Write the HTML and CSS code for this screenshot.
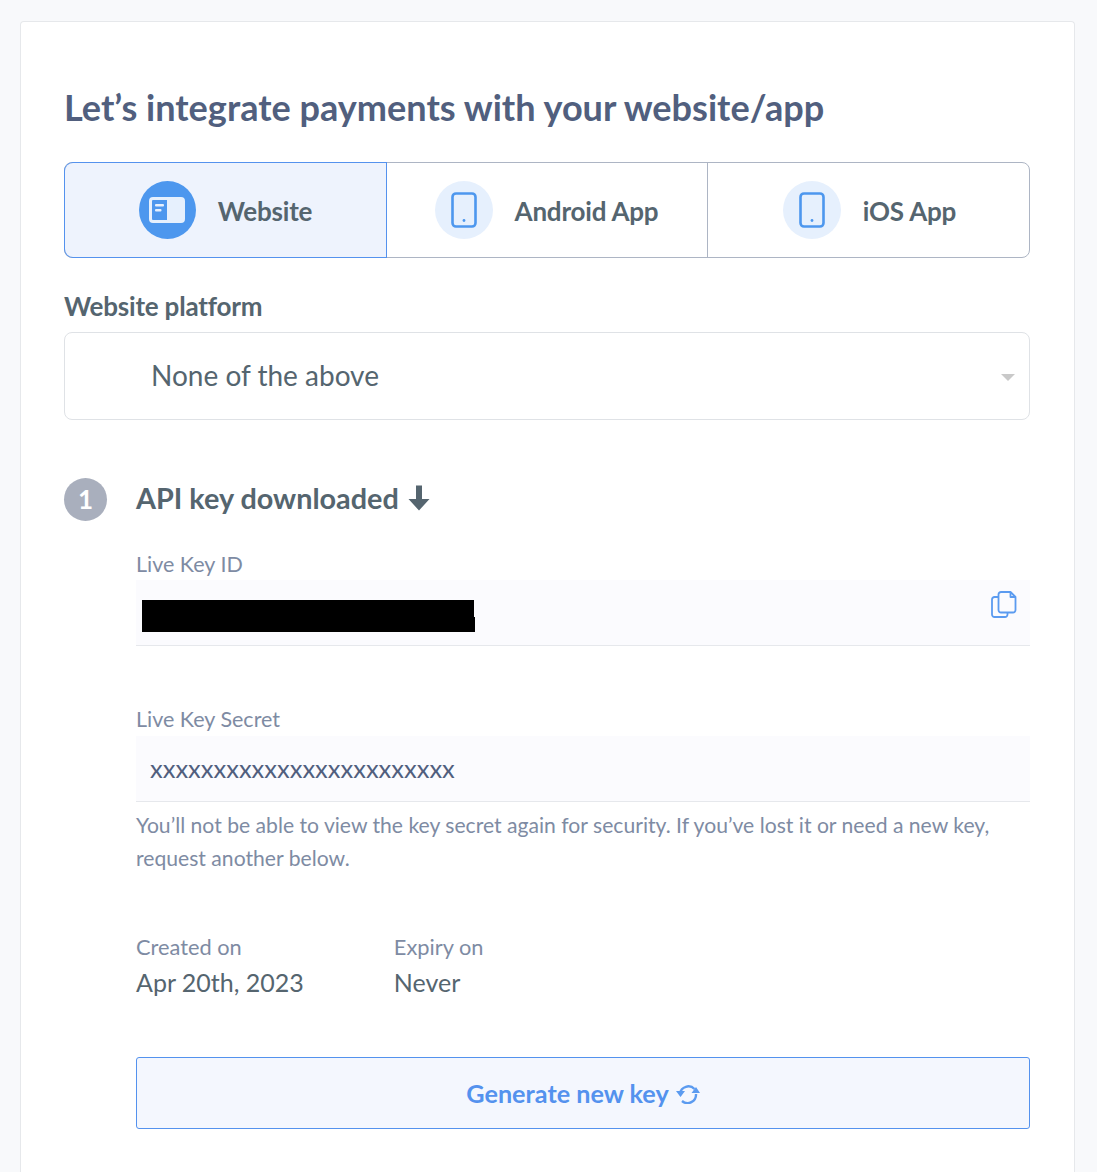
FILE: index.html
```html
<!DOCTYPE html>
<html lang="en">
<head>
<meta charset="utf-8">
<title>Integrate payments</title>
<link rel="stylesheet" href="styles.css">
</head>
<body>
<main class="card">
  <h1 class="title">Let’s integrate payments with your website/app</h1>
  <div class="tabs">
    <div class="tab tab-active">
      <span class="tab-icon tab-icon-active">
        <svg width="36" height="26" viewBox="0 0 36 26"><rect x="1" y="1" width="34" height="24" rx="3" fill="#e6f0fd" stroke="#e6f0fd" stroke-width="2"/><path d="M3 4a1 1 0 0 1 1-1h14v20H4a1 1 0 0 1-1-1z" fill="#4d97ee"/><rect x="6" y="7" width="9" height="2.4" rx="1" fill="#e6f0fd"/><rect x="6" y="12" width="6.5" height="2.4" rx="1" fill="#e6f0fd"/></svg>
      </span>
      <span class="tab-label">Website</span>
    </div>
    <div class="tab">
      <span class="tab-icon">
        <svg width="26" height="36" viewBox="0 0 26 36"><rect x="1.5" y="1.5" width="23" height="33" rx="3.5" fill="none" stroke="#4d97ee" stroke-width="2.6"/><circle cx="13" cy="28.5" r="1.4" fill="#4d97ee"/></svg>
      </span>
      <span class="tab-label">Android App</span>
    </div>
    <div class="tab">
      <span class="tab-icon">
        <svg width="26" height="36" viewBox="0 0 26 36"><rect x="1.5" y="1.5" width="23" height="33" rx="3.5" fill="none" stroke="#4d97ee" stroke-width="2.6"/><circle cx="13" cy="28.5" r="1.4" fill="#4d97ee"/></svg>
      </span>
      <span class="tab-label">iOS App</span>
    </div>
  </div>

  <div class="field-label">Website platform</div>
  <div class="select">
    <span class="select-value">None of the above</span>
    <span class="caret"></span>
  </div>

  <section class="step">
    <div class="step-head">
      <span class="step-num">1</span>
      <h2 class="step-title">API key downloaded</h2>
      <svg class="step-arrow" width="22" height="26" viewBox="0 0 22 26"><path d="M8 0.500h6v13.500h7.500L11 25.500 0.500 14H8z" fill="#55656f"/></svg>
    </div>
    <div class="step-body">
      <div class="key-label">Live Key ID</div>
      <div class="key-box">
        <span class="redact"></span>
        <svg class="copy" width="26" height="27" viewBox="0 0 26 27" fill="none" stroke="#5b9bf0" stroke-width="1.8" stroke-linejoin="round"><path d="M7.500 6H3.500A2.500 2.500 0 0 0 1 8.500v15A2.500 2.500 0 0 0 3.500 26H14a2.500 2.500 0 0 0 2.500-2.500v-2"/><path d="M10 1h9.500l5 5v13a2.500 2.500 0 0 1-2.500 2.500H10A2.500 2.500 0 0 1 7.500 19V3.500A2.500 2.500 0 0 1 10 1z"/><path d="M19.500 1.500v4.500h4.500"/></svg>
      </div>

      <div class="key-label key-label-second">Live Key Secret</div>
      <div class="key-box"><span class="secret">xxxxxxxxxxxxxxxxxxxxxxxx</span></div>
      <p class="hint">You’ll not be able to view the key secret again for security. If you’ve lost it or need a new key, request another below.</p>

      <div class="meta">
        <div class="meta-item">
          <div class="meta-label">Created on</div>
          <div class="meta-value">Apr 20th, 2023</div>
        </div>
        <div class="meta-item">
          <div class="meta-label">Expiry on</div>
          <div class="meta-value">Never</div>
        </div>
      </div>

      <button class="generate" type="button">
        <span>Generate new key</span>
        <svg class="sync" width="24" height="20" viewBox="0 0 24 20"><g fill="none" stroke="#5b9bf0" stroke-width="2.400"><path d="M4 9.500A8.500 8.500 0 0 1 18.500 5"/><path d="M20 10A8.500 8.500 0 0 1 6 17"/></g><path d="M0 7h9L4.500 13zM15.500 9h8.500L20 3z" fill="#5b9bf0"/></svg>
      </button>
    </div>
  </section>
</main>
</body>
</html>
```
FILE: styles.css
```css
* { box-sizing: border-box; }
html, body { margin: 0; padding: 0; }
body {
  background: #f8f9fb;
  font-family: Lato, "Liberation Sans", sans-serif;
  height: 1172px;
  overflow: hidden;
  padding: 21px 22px 0 20px;
}
.card {
  background: #fff;
  border: 1px solid #e6e8eb;
  border-bottom: 0;
  border-radius: 4px 4px 0 0;
  padding: 60px 44px 0 43px;
  height: 1151px;
}
.title {
  margin: 0;
  font-size: 36.100px;
  line-height: 50px;
  font-weight: 700;
  color: #515f7e;
}
.tabs {
  margin-top: 30px;
  display: grid;
  grid-template-columns: 321px 321px 322px;
  height: 96px;
  border: 1px solid #adb5c4;
  border-radius: 8px;
  background: #fff;
}
.tab {
  display: flex;
  align-items: center;
  justify-content: center;
  gap: 22px;
  color: #55656f;
  border-left: 1px solid #adb5c4;
}
.tab:first-child { border-left: 0; }
.tab:last-child { padding-left: 2px; }
.tab-active {
  background: #eef3fd;
  box-shadow: 0 0 0 1px #5492ee;
  border-radius: 8px 0 0 8px;
  position: relative;
}
.tab-active + .tab { border-left: 0; }
.tab-icon {
  width: 58px;
  height: 58px;
  border-radius: 50%;
  background: #e6f0fd;
  display: flex;
  align-items: center;
  justify-content: center;
  flex: none;
}
.tab-icon-active { background: #4d97ee; width: 57px; }
.tab-label { font-weight: 700; font-size: 26px; letter-spacing: -0.2px; padding-top: 2px; }
.field-label {
  margin-top: 30px;
  font-size: 26px;
  letter-spacing: -0.2px;
  line-height: 36px;
  font-weight: 700;
  color: #55656f;
}
.select {
  margin-top: 8px;
  height: 88px;
  border: 1px solid #dfe2e6;
  border-radius: 8px;
  display: flex;
  align-items: center;
  justify-content: space-between;
  padding: 0 14px 2px 86px;
}
.select-value { font-size: 28px; color: #55656f; }
.caret {
  width: 0;
  height: 0;
  border-left: 7px solid transparent;
  border-right: 7px solid transparent;
  border-top: 7px solid #c9c9c9;
  margin-top: 4px;
}
.step { margin-top: 56px; }
.step-head { display: flex; align-items: center; height: 46px; }
.step-num {
  width: 43px;
  height: 43px;
  border-radius: 50%;
  background: #a9afbd;
  color: #fff;
  font-size: 26px;
  font-weight: 700;
  display: flex;
  align-items: center;
  justify-content: center;
  flex: none;
}
.step-title {
  margin: -2px 0 0 29px;
  font-size: 28.800px;
  font-weight: 700;
  color: #55656f;
  line-height: 46px;
}
.step-arrow { margin-left: 9px; margin-top: -2px; }
.step-body { margin-left: 72px; }
.key-label {
  margin-top: 26px;
  font-size: 21.500px;
  line-height: 32px;
  color: #7e8ba3;
}
.key-label-second { margin-top: 57px; line-height: 33px; }
.key-box {
  background: #fbfbfe;
  border-bottom: 1px solid #e6e8ec;
  height: 66px;
  display: flex;
  align-items: center;
  justify-content: space-between;
  padding: 0 13px 0 6px;
}
.redact { width: 332px; height: 32px; background: #000; margin-top: 7px; position: relative; }
.redact::after {
  content: "";
  position: absolute;
  left: 1px;
  top: 17px;
  width: 332px;
  height: 15px;
  background: #000;
}
.copy { margin-top: -16px; }
.secret { font-size: 25.500px; color: #515f7e; padding-left: 8px; margin-top: -1px; }
.hint {
  margin: 7px 0 0;
  font-size: 21.150px;
  line-height: 33px;
  color: #7e8ba3;
}
.meta { display: flex; gap: 90px; margin-top: 56px; }
.meta-label { font-size: 21.800px; line-height: 32px; color: #7e8ba3; }
.meta-value { font-size: 25px; line-height: 36px; color: #55656f; margin-top: 1px; }
.generate {
  margin-top: 57px;
  width: 100%;
  height: 72px;
  background: #f4f7fe;
  border: 1px solid #5492ee;
  border-radius: 3px;
  color: #5492ee;
  font-family: inherit;
  font-size: 25.200px;
  font-weight: 700;
  display: flex;
  align-items: center;
  justify-content: center;
  gap: 7px;
  padding: 0;
}
.sync { margin-top: 2px; }
```
